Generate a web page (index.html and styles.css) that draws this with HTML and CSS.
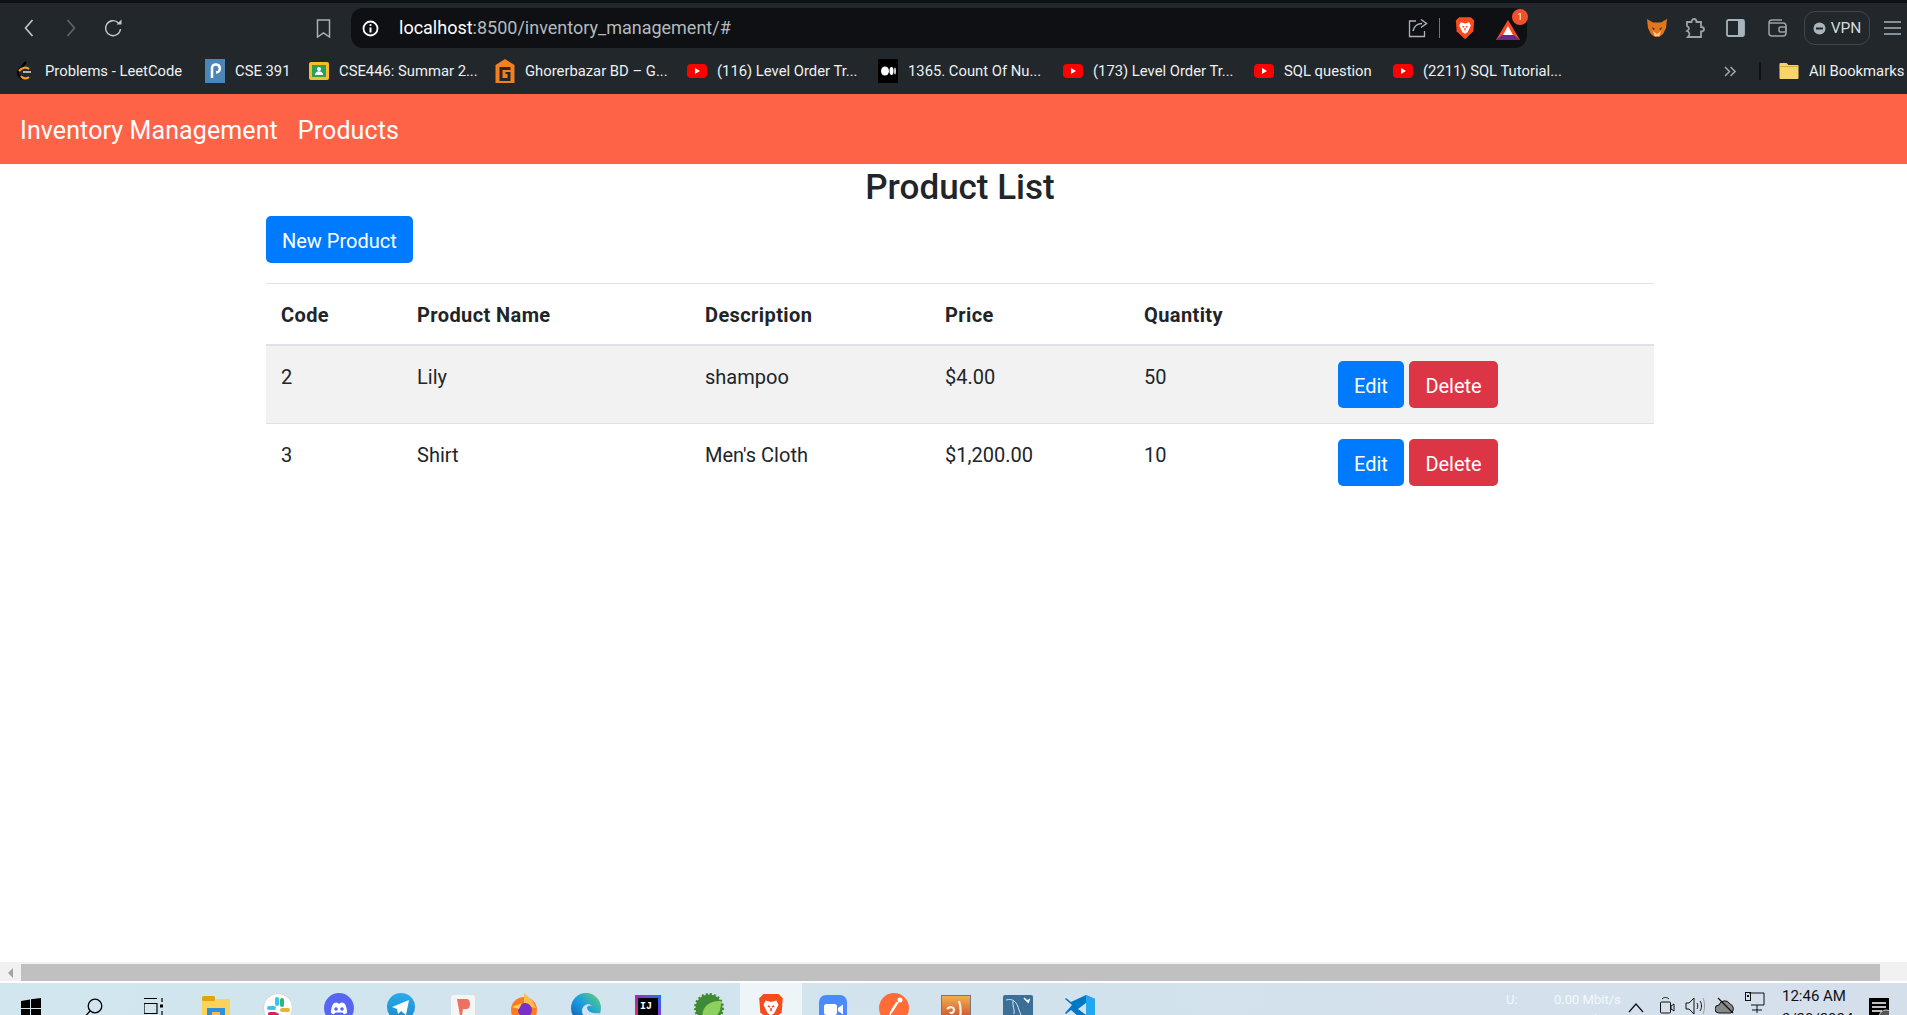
FILE: index.html
```html
<!DOCTYPE html>
<html lang="en">
<head>
  <meta charset="UTF-8">
  <title>Inventory Management</title>
  <link rel="stylesheet" href="styles.css">
</head>
<body>
  <svg class="defs" width="0" height="0">
    <symbol id="yt" viewBox="0 0 20 14"><rect width="20" height="14" rx="4" fill="#f00"/><path d="M8 4l5 3-5 3z" fill="#fff"/></symbol>
    <symbol id="lion" viewBox="0 0 24 28"><path d="M5 1h14l4 4-1 13-10 9.500L2 18 1 5z" fill="#fb4a1c"/><path d="M7 7l5 1.500L17 7l2 4-2.500 5-1.500 3-3 2-3-2-1.500-3L5 11z" fill="#fff"/><path d="M9 12l2 1M15 12l-2 1M12 14v3" stroke="#fb4a1c" stroke-width="1.500" fill="none"/></symbol>
  </svg>

  <div class="top-strip"></div>

  <div class="toolbar">
    <svg class="tb-icon back" width="10" height="20" viewBox="0 0 10 20"><path d="M8.500 2L1.500 10l7 8" fill="none" stroke="#c3c9ce" stroke-width="1.600"/></svg>
    <svg class="tb-icon forward" width="10" height="20" viewBox="0 0 10 20"><path d="M1.500 2l7 8-7 8" fill="none" stroke="#5f666c" stroke-width="1.600"/></svg>
    <svg class="tb-icon reload" width="20" height="20" viewBox="0 0 20 20"><path d="M15.500 5A7.500 7.500 0 1 0 17.500 11" fill="none" stroke="#c3c9ce" stroke-width="1.400"/><path d="M13.500 6.500h5v-5z" fill="#c3c9ce"/></svg>
    <svg class="tb-icon bookmark" width="15" height="19" viewBox="0 0 15 19"><path d="M1.500 1h12v17l-6-4-6 4z" fill="none" stroke="#a9b0b6" stroke-width="1.500"/></svg>

    <div class="address">
      <svg width="17" height="17" viewBox="0 0 17 17"><circle cx="8.500" cy="8.500" r="7" fill="none" stroke="#fff" stroke-width="1.800"/><path d="M8.500 7.500v5" stroke="#fff" stroke-width="2"/><circle cx="8.500" cy="5" r="1.100" fill="#fff"/></svg>
      <span class="url"><span class="host">localhost</span>:8500/inventory_management/#</span>
      <svg class="share" width="20" height="20" viewBox="0 0 20 20"><path d="M8 3H1.500v15.500h15V13" fill="none" stroke="#aab1b7" stroke-width="1.300"/><path d="M5 13c1-5 5-7.500 9-7.500M13 1.500l5.500 4-5.500 4" fill="none" stroke="#aab1b7" stroke-width="1.500"/></svg>
      <span class="addr-sep"></span>
      <svg width="20" height="24" viewBox="0 0 24 28"><use href="#lion"/></svg>
      <span class="bat">
        <svg width="24" height="20" viewBox="0 0 24 20"><path d="M12 0l12 20H0z" fill="#ff4724"/><path d="M0 20l6-5h12l6 5z" fill="#662d91"/><path d="M12 6l5 9H7z" fill="#fff"/></svg>
        <span class="bat-badge">1</span>
      </span>
    </div>

    <div class="tb-right">
      <svg width="20" height="20" viewBox="0 0 20 20"><path d="M0 1l6 3.500h8L20 1l-1 9-3 6-4 3H8l-4-3-3-6z" fill="#e2761b"/><path d="M5 9l3 2-2 1zM15 9l-3 2 2 1z" fill="#233447"/><path d="M6 13l4 3 4-3-1.500 5h-5z" fill="#f6c9a3"/></svg>
      <svg class="puzzle" width="20" height="21" viewBox="0 0 20 21"><path d="M2 4h4.500c0-4 5-4 5 0H16v5c4 0 4 4.500 0 4.500V19H3c2-2 2-5-1-6 3-2 2-4 0-5z" fill="none" stroke="#98a3aa" stroke-width="1.800"/></svg>
      <svg class="side" width="19" height="18" viewBox="0 0 19 18"><rect x="1" y="1" width="17" height="16" rx="1.500" fill="none" stroke="#a6b4bd" stroke-width="1.800"/><rect x="12" y="1" width="6" height="16" fill="#a6b4bd"/></svg>
      <svg class="wallet" width="19" height="18" viewBox="0 0 19 18"><path d="M14 1H4C2 1 1 2 1 4v10c0 2 1 3 3 3h11c2 0 3-1 3-3V7c0-2-1-3-3-3H1" fill="none" stroke="#98a3aa" stroke-width="1.500"/><rect x="11" y="8" width="7" height="5" rx="1.500" fill="none" stroke="#98a3aa" stroke-width="1.500"/></svg>
      <div class="vpn">
        <svg width="13" height="13" viewBox="0 0 13 13"><circle cx="6.500" cy="6.500" r="6" fill="#a9b4bc"/><rect x="3" y="5.500" width="7" height="2" fill="#22272b"/></svg>
        VPN
      </div>
      <svg width="17" height="14" viewBox="0 0 17 14"><path d="M0 1h17M0 7h17M0 13h17" stroke="#a9b4bc" stroke-width="1.500"/></svg>
    </div>
  </div>

  <div class="bookmarks">
    <div class="bm">
      <svg width="20" height="20" viewBox="0 0 20 20"><path d="M11 1L4 9c-2 2-1 5 1 7l3 2" fill="none" stroke="#000" stroke-width="2"/><path d="M4 10c3-4 8-4 10-2" fill="none" stroke="#f89f1b" stroke-width="2.200"/><path d="M6 15c2 3 6 3 8 1" fill="none" stroke="#f89f1b" stroke-width="2.200"/><path d="M8 11h8" stroke="#b3b3b3" stroke-width="2"/></svg>
      <span>Problems - LeetCode</span>
    </div>
    <div class="bm">
      <svg width="20" height="24" viewBox="0 0 20 24"><rect width="20" height="24" fill="#4a86b8"/><path d="M7 19V8.500a4 4 0 1 1 4 5" fill="none" stroke="#fff" stroke-width="2.500"/></svg>
      <span>CSE 391</span>
    </div>
    <div class="bm">
      <svg width="20" height="18" viewBox="0 0 20 18"><rect width="20" height="18" rx="2" fill="#f6bf26"/><rect x="3" y="3" width="14" height="12" fill="#2f9e57"/><circle cx="10" cy="7" r="2" fill="#fff"/><path d="M6 13c0-5 8-5 8 0z" fill="#fff"/></svg>
      <span>CSE446: Summar 2...</span>
    </div>
    <div class="bm">
      <svg width="19" height="24" viewBox="0 0 19 24"><path d="M9.500 0L19 6v18H0V6z" fill="#f08020"/><path d="M4 8h11v3H7v8h5v-4h-2v-2h5v9H4z" fill="#22272b"/></svg>
      <span>Ghorerbazar BD – G...</span>
    </div>
    <div class="bm"><svg width="20" height="14"><use href="#yt"/></svg><span>(116) Level Order Tr...</span></div>
    <div class="bm">
      <svg width="20" height="24" viewBox="0 0 20 24"><rect width="20" height="24" rx="1" fill="#000"/><ellipse cx="7" cy="12" rx="4" ry="4.500" fill="#fff"/><ellipse cx="13.500" cy="12" rx="2" ry="4" fill="#fff"/><ellipse cx="17" cy="12" rx="0.800" ry="3.500" fill="#fff"/></svg>
      <span>1365. Count Of Nu...</span>
    </div>
    <div class="bm"><svg width="20" height="14"><use href="#yt"/></svg><span>(173) Level Order Tr...</span></div>
    <div class="bm"><svg width="20" height="14"><use href="#yt"/></svg><span>SQL question</span></div>
    <div class="bm"><svg width="20" height="14"><use href="#yt"/></svg><span>(2211) SQL Tutorial...</span></div>
    <svg class="bm-more" width="12" height="11" viewBox="0 0 12 11"><path d="M1 1l4.500 4.500L1 10M6.500 1L11 5.500 6.500 10" fill="none" stroke="#98a3aa" stroke-width="1.600"/></svg>
    <span class="bm-sep"></span>
    <div class="bm">
      <svg width="19" height="16" viewBox="0 0 19 16"><path d="M1 0h6l2 2h9a1 1 0 0 1 1 1v12a1 1 0 0 1-1 1H1a1 1 0 0 1-1-1V1a1 1 0 0 1 1-1z" fill="#f8d568"/><path d="M0 3h19v1H0z" fill="#e0ad37"/></svg>
      <span>All Bookmarks</span>
    </div>
  </div>

  <nav class="navbar">
    <a href="#">Inventory Management</a>
    <a href="#">Products</a>
  </nav>

  <main class="main">
    <div class="container">
      <h2 class="title">Product List</h2>
      <a class="btn btn-primary new-btn" href="#">New Product</a>
      <table class="table">
        <colgroup><col class="c1"><col class="c2"><col class="c3"><col class="c4"><col class="c5"><col class="c6"></colgroup>
        <thead>
          <tr><th>Code</th><th>Product Name</th><th>Description</th><th>Price</th><th>Quantity</th><th></th></tr>
        </thead>
        <tbody>
          <tr class="odd">
            <td>2</td><td>Lily</td><td>shampoo</td><td>$4.00</td><td>50</td>
            <td class="actions"><a class="btn btn-primary" href="#">Edit</a><a class="btn btn-danger" href="#">Delete</a></td>
          </tr>
          <tr>
            <td>3</td><td>Shirt</td><td>Men's Cloth</td><td>$1,200.00</td><td>10</td>
            <td class="actions"><a class="btn btn-primary" href="#">Edit</a><a class="btn btn-danger" href="#">Delete</a></td>
          </tr>
        </tbody>
      </table>
    </div>
  </main>

  <div class="hscroll">
    <div class="hscroll-arrow"><svg width="5" height="10" viewBox="0 0 5 10"><path d="M5 0v10L0 5z" fill="#a3a3a3"/></svg></div>
    <div class="hscroll-thumb"></div>
  </div>

  <div class="taskbar">
    <div class="apps">
      <div class="app"><svg class="i-win" width="20" height="22" viewBox="0 0 20 22"><path d="M0 3l9-1.500V10H0zM10 1.300L20 0v10H10zM0 11h9v9l-9-1.500zM10 11h10v11l-10-1.500z" fill="#000"/></svg></div>
      <div class="app"><svg class="i-win" width="20" height="22" viewBox="0 0 20 22"><circle cx="12" cy="8" r="6.800" fill="none" stroke="#000" stroke-width="1.300"/><path d="M7 13L0 21" stroke="#000" stroke-width="1.300"/></svg></div>
      <div class="app"><svg class="i-win" width="20" height="22" viewBox="0 0 20 22"><path d="M0 .5h13M0 5.500h13v10H0zM0 19.500h13M18 0v4M18 13v6" fill="none" stroke="#000" stroke-width="1.200"/><rect x="16" y="6.500" width="3" height="3" fill="#000"/></svg></div>
      <div class="app"><svg class="i-folder" width="28" height="24" viewBox="0 0 28 24"><rect y="3" width="28" height="21" rx="1" fill="#fbd35c"/><rect width="13" height="5" rx="1.500" fill="#e2a30c"/><rect x="5" y="12" width="18" height="12" fill="#2f8fd8"/><rect x="10" y="16" width="8" height="8" fill="#f0c050"/></svg></div>
      <div class="app"><svg width="30" height="30" viewBox="0 0 30 30"><circle cx="15" cy="15" r="14.500" fill="#fff" stroke="#d4d8da"/><rect x="12" y="4" width="4" height="9" rx="2" fill="#36c5f0"/><rect x="4" y="13" width="9" height="4" rx="2" fill="#36c5f0"/><rect x="17" y="5" width="4" height="9" rx="2" fill="#2eb67d"/><rect x="17" y="15" width="10" height="4" rx="2" fill="#ecb22e"/><rect x="5" y="19" width="9" height="4" rx="2" fill="#e01e5a"/><rect x="12" y="20" width="4" height="9" rx="2" fill="#e01e5a"/></svg></div>
      <div class="app"><svg width="30" height="30" viewBox="0 0 30 30"><circle cx="15" cy="15" r="15" fill="#5865f2"/><path d="M7 20c0-5 1-8 3-10l3-.5 1 1h2l1-1 3 .5c2 2 3 5 3 10l-3 1.500-1.500-2h-7L9.500 21.500z" fill="#fff"/><circle cx="12" cy="16" r="1.800" fill="#5865f2"/><circle cx="18" cy="16" r="1.800" fill="#5865f2"/></svg></div>
      <div class="app"><svg width="28" height="28" viewBox="0 0 28 28"><defs><linearGradient id="tg" x2="0" y2="1"><stop offset="0" stop-color="#2aabee"/><stop offset="1" stop-color="#1a8ac8"/></linearGradient></defs><circle cx="14" cy="14" r="14" fill="url(#tg)"/><path d="M5 14L22 7l-3 15-5-4-3 3-1-5z" fill="#fff"/></svg></div>
      <div class="app"><svg class="i-p" width="24" height="24" viewBox="0 0 24 24"><rect width="24" height="24" rx="3" fill="#f4f5f5"/><path d="M6 4h10c4 0 4 10 0 10h-4l-1 6-2 1-1-6z" fill="#f0705f"/></svg></div>
      <div class="app"><svg width="28" height="30" viewBox="0 0 28 30"><circle cx="14" cy="17" r="13" fill="#ff7a22"/><path d="M14 0l8 7 4 8-12-2z" fill="#ffbd4f"/><circle cx="15" cy="17" r="7" fill="#7b2fc9"/><path d="M2 14l10-4-3 6z" fill="#ffd43f"/></svg></div>
      <div class="app"><svg width="30" height="30" viewBox="0 0 30 30"><defs><linearGradient id="edge" x1="0" y1="1" x2="1" y2="0"><stop offset="0" stop-color="#0c59a4"/><stop offset=".5" stop-color="#1b9de2"/><stop offset="1" stop-color="#64d66b"/></linearGradient></defs><circle cx="15" cy="15" r="15" fill="url(#edge)"/><path d="M30 20c-5 1-13 0-14-5 0-3 4-3 5-2-3-4-10-1-10 5 0 3 2 6 4 7h10z" fill="#d0e5ee"/></svg></div>
      <div class="app"><svg class="i-p" width="26" height="26" viewBox="0 0 26 26"><defs><linearGradient id="ij" x1="0" y1="1" x2="1" y2="0"><stop offset="0" stop-color="#fe2857"/><stop offset=".5" stop-color="#a028c8"/><stop offset="1" stop-color="#087cfa"/></linearGradient></defs><rect width="26" height="26" fill="url(#ij)"/><rect x="3" y="3" width="20" height="23" fill="#000"/><text x="5" y="14" class="ij-text">IJ</text><rect x="5" y="22" width="8" height="2" fill="#fff"/></svg></div>
      <div class="app"><svg width="30" height="30" viewBox="0 0 30 30"><circle cx="15" cy="15" r="13.500" fill="#3f8a34" stroke="#3f8a34" stroke-width="3" stroke-dasharray="2 2"/><path d="M9 27C6 15 15 7 27 8c1 12-6 20-18 19z" fill="#8ed05e"/></svg></div>
      <div class="app active"><svg width="26" height="30" viewBox="0 0 24 28"><use href="#lion"/></svg></div>
      <div class="app"><svg class="i-p" width="28" height="28" viewBox="0 0 28 28"><rect width="28" height="28" rx="7" fill="#4a8cff"/><rect x="5" y="9" width="13" height="11" rx="2.500" fill="#fff"/><path d="M19 13l5-3.500v10L19 16z" fill="#fff"/></svg></div>
      <div class="app"><svg width="30" height="30" viewBox="0 0 30 30"><circle cx="15" cy="15" r="15" fill="#ff6c37"/><circle cx="21" cy="7" r="2.500" fill="#fff"/><path d="M20 9l-5 8-5 7 1-5 3-5 3-5z" fill="#fff"/></svg></div>
      <div class="app"><svg class="i-p" width="30" height="28" viewBox="0 0 30 28"><defs><linearGradient id="xa" x2="0" y2="1"><stop offset="0" stop-color="#f2b14e"/><stop offset="1" stop-color="#c63f28"/></linearGradient></defs><rect x=".5" y=".5" width="29" height="27" fill="url(#xa)" stroke="#777"/><path d="M6 14c3-3 7-2 7 1s-3 4-4 2M18 6c2 6 2 14 0 20" fill="none" stroke="#f5efe5" stroke-width="2.200"/></svg></div>
      <div class="app"><svg class="i-p" width="30" height="28" viewBox="0 0 30 28"><rect width="30" height="28" rx="2" fill="#3c6f97"/><path d="M3 5c7-2 11 2 13 10l3 8M10 6c-1 4 2 8 1 13" fill="none" stroke="#d5e2ea" stroke-width="1"/><path d="M21 3l3 3 2-1-1 3" fill="none" stroke="#fff" stroke-width="1.500"/></svg></div>
      <div class="app"><svg class="i-p" width="30" height="28" viewBox="0 0 30 28"><path d="M21 0l9 4v20l-9 4L6 15l-5 4-1-1 7-8L0 4l1-1 5 4z" fill="#0078c6"/><path d="M21 0l9 4v20l-9 4z" fill="#22a7f0"/><path d="M21 8l-8 6 8 6z" fill="#d3e3ed"/></svg></div>
    </div>

    <div class="tray">
      <div class="netspeed">
        <div class="net-row"><span>U:</span><span>0.00 Mbit/s</span></div>
        <div class="net-row"><span>D:</span><span>0.00 Mbit/s</span></div>
      </div>
      <svg class="t-chevron" width="16" height="10" viewBox="0 0 16 10"><path d="M1 9l7-8 7 8" fill="none" stroke="#111" stroke-width="1.200"/></svg>
      <svg class="t-icon t-cam" width="15" height="17" viewBox="0 0 15 17"><rect x=".5" y="5" width="10" height="11" rx="1" fill="none" stroke="#111"/><path d="M11 9l3-2v7l-3-2zM2 2c2-2 5-2 7 0" fill="none" stroke="#111"/></svg>
      <svg class="t-icon" width="20" height="18" viewBox="0 0 20 18"><path d="M1 6h3l5-5v16l-5-5H1z" fill="none" stroke="#111"/><path d="M12 6c1 2 1 4 0 6M15 4c2 3 2 7 0 10" fill="none" stroke="#111"/><path d="M18 1c2 4 2 12 0 16" fill="none" stroke="#999"/></svg>
      <svg class="t-icon" width="20" height="18" viewBox="0 0 20 18"><path d="M4 16a4 4 0 0 1 0-8 6 6 0 0 1 11-1 5 5 0 0 1 1 9z" fill="#888" stroke="#111"/><path d="M3 1l15 15" stroke="#111" stroke-width="1.300"/></svg>
      <svg class="t-icon net" width="20" height="22" viewBox="0 0 20 22"><path d="M4 1h15v12H6M12 13v8M7 18h10" fill="none" stroke="#111"/><rect x=".5" y=".5" width="5" height="8" fill="none" stroke="#111"/><rect x="2" y="3" width="2" height="2" fill="#111"/></svg>
      <div class="clock">
        <div>12:46 AM</div>
        <div>3/20/2024</div>
      </div>
      <div class="notif"><svg width="20" height="22" viewBox="0 0 20 22"><rect width="20" height="22" fill="#000"/><path d="M3 5h14M3 9h14M3 13h10" stroke="#fff" stroke-width="1.300"/><circle cx="17" cy="19" r="7" fill="#555" stroke="#ccc"/></svg></div>
    </div>
  </div>
</body>
</html>
```

FILE: styles.css
```css
* {
  margin: 0;
  padding: 0;
  box-sizing: border-box;
}
html, body {
  height: 100%;
}
body {
  display: flex;
  flex-direction: column;
  overflow: hidden;
  background: #fff;
  color: #212529;
  font-family: Roboto, "Noto Sans", sans-serif;
}
a {
  text-decoration: none;
  color: inherit;
}
svg {
  display: block;
  flex-shrink: 0;
}
.defs {
  position: absolute;
}

/* browser chrome */
.top-strip {
  height: 3px;
  background: #0f1116;
}
.toolbar {
  height: 45px;
  padding-top: 5px;
  display: flex;
  align-items: center;
  background: #22272b;
}
.tb-icon.back {
  margin-left: 24px;
}
.tb-icon.forward {
  margin-left: 32px;
}
.tb-icon.reload {
  margin-left: 27px;
}
.tb-icon.bookmark {
  margin-left: 193px;
}
.address {
  margin-left: 20px;
  width: 1176px;
  height: 40px;
  background: #0e1014;
  border-radius: 12px;
  display: flex;
  align-items: center;
  padding-left: 11px;
}
.url {
  margin: -1px 0 0 20px;
  font-size: 18px;
  color: #b4babf;
  flex: 1;
}
.host {
  color: #fff;
}
.addr-sep {
  width: 1px;
  height: 20px;
  background: #6e757b;
  margin: 0 15px 0 11px;
}
.bat {
  position: relative;
  margin: 4px 7px 0 21px;
}
.bat-badge {
  position: absolute;
  top: -11px;
  right: -8px;
  width: 16px;
  height: 16px;
  border-radius: 50%;
  background: #f0502c;
  color: #fff;
  font-size: 9px;
  line-height: 16px;
  text-align: center;
}
.tb-right {
  margin-left: 120px;
  display: flex;
  align-items: center;
  gap: 20px;
}
.tb-right .puzzle {
  margin-left: -2px;
}
.tb-right .side {
  margin-left: 1px;
}
.tb-right .wallet {
  margin-left: 3px;
}
.vpn {
  width: 66px;
  height: 34px;
  border: 1px solid #3e474d;
  border-radius: 11px;
  display: flex;
  align-items: center;
  justify-content: center;
  gap: 5px;
  margin: 0 -6px 0 -3px;
  color: #d5dade;
  font-size: 15.500px;
}
.bookmarks {
  height: 46px;
  padding-left: 15px;
  background: #22272b;
  display: grid;
  grid-template-columns: 190px 104px 186px 192px 191px 185px 191px 139px 331px 35px 20px 128px;
  align-items: center;
}
.bm {
  display: flex;
  align-items: center;
  white-space: nowrap;
  gap: 10px;
  color: #eef0f2;
  font-size: 14.800px;
  margin-top: -1px;
}
.bm > svg {
  width: 20px;
}
.bm-sep {
  width: 2px;
  height: 18px;
  background: #0e1014;
}

/* page */
.navbar {
  height: 70px;
  flex-shrink: 0;
  background: #ff6347;
  display: flex;
  align-items: center;
  gap: 20px;
  padding: 2px 0 0 20px;
  color: #fff;
  font-size: 25px;
  letter-spacing: .1px;
}
.main {
  flex: 1;
  overflow: hidden;
}
.container {
  width: 1388px;
  margin-left: 266px;
}
.title {
  text-align: center;
  font-size: 35px;
  font-weight: 500;
  line-height: 48px;
  margin-bottom: 4px;
  color: #212529;
}
.btn {
  display: inline-block;
  height: 47px;
  line-height: 47px;
  padding: 2px 16px 0;
  border-radius: 5px;
  color: #fff;
  font-size: 20px;
}
.btn-primary {
  background: #007bff;
}
.btn-danger {
  background: #dc3545;
  margin-left: 5px;
  padding: 2px 16.500px 0;
}
.table {
  margin-top: 20px;
  width: 100%;
  table-layout: fixed;
  border-collapse: collapse;
  font-size: 20px;
  line-height: 30px;
}
.c1 { width: 136px; }
.c2 { width: 288px; }
.c3 { width: 240px; }
.c4 { width: 199px; }
.c5 { width: 194px; }
.c6 { width: 331px; }
.table th {
  text-align: left;
  font-weight: 700;
  padding: 16px 15px 14px;
  height: 61px;
  letter-spacing: .4px;
  border-top: 1px solid #dee2e6;
  border-bottom: 2px solid #dee2e6;
}
.table td {
  padding: 16px 15px 14px;
  height: 77px;
  vertical-align: top;
}
.table td.actions {
  padding: 15px;
  white-space: nowrap;
  font-size: 0;
}
.odd {
  background: #f2f2f2;
  border-bottom: 1px solid #dee2e6;
}

/* scrollbar at the bottom of the window */
.hscroll {
  height: 19px;
  flex-shrink: 0;
  background: #f1f1f1;
  display: flex;
  align-items: stretch;
  padding-top: 2px;
  padding-right: 27px;
}
.hscroll-arrow {
  width: 21px;
  display: flex;
  align-items: center;
  justify-content: center;
}
.hscroll-thumb {
  flex: 1;
  background: #c0c0c0;
}

/* windows taskbar, cut by the bottom of the picture */
.taskbar {
  height: 32px;
  flex-shrink: 0;
  margin-top: 2px;
  overflow: hidden;
  display: flex;
  justify-content: space-between;
  background: linear-gradient(90deg, #d1e6ee, #d2e3ed 50%, #d5dfec);
}
.apps {
  display: grid;
  grid-auto-flow: column;
  grid-auto-columns: 61.700px;
}
.app {
  height: 50px;
  padding-top: 10px;
  display: flex;
  justify-content: center;
}
.app .i-win {
  margin-top: 5px;
}
.app .i-folder {
  margin-top: 3px;
}
.app .i-p {
  margin-top: 2px;
}
.app.active {
  background: #edf5f8;
}
.ij-text {
  font-family: "Liberation Mono", monospace;
  font-size: 10px;
  font-weight: 700;
  fill: #fff;
}
.tray {
  display: flex;
  align-items: flex-start;
  height: 60px;
  color: #111;
}
.tray > svg {
  margin-top: 14px;
  margin-left: 10px;
}
.tray > .t-chevron {
  margin-top: 20px;
  margin-left: 8px;
}
.tray > .t-cam {
  margin-left: 16px;
}
.tray > .net {
  margin-top: 9px;
}
.netspeed {
  padding-top: 7px;
  color: #f4f8fb;
  font-size: 13px;
  line-height: 20px;
}
.net-row {
  display: grid;
  grid-template-columns: 48px 66px;
  white-space: nowrap;
}
.clock {
  margin-left: 17px;
  padding-top: 2px;
  width: 87px;
  font-size: 15px;
  line-height: 23px;
}
.notif {
  margin-top: 15px;
  width: 38px;
}
```
